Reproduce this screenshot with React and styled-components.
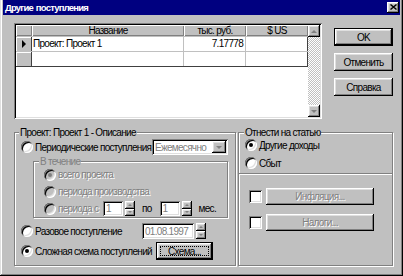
import React from 'react'
import styled, { createGlobalStyle, css } from 'styled-components'

const GlobalStyle = createGlobalStyle`
  html, body {
    margin: 0;
    padding: 0;
    background: #c0c0c0;
  }
  body {
    font-family: "Liberation Sans", Arial, sans-serif;
    font-size: 10px;
    letter-spacing: -0.7px;
    color: #000;
  }
  * { box-sizing: border-box; }
`

const raised = css`
  background: #c0c0c0;
  box-shadow: inset -1px -1px 0 #000, inset 1px 1px 0 #fff,
    inset -2px -2px 0 #808080, inset 2px 2px 0 #dfdfdf;
`

const sunken = css`
  box-shadow: inset 1px 1px 0 #808080, inset -1px -1px 0 #fff,
    inset 2px 2px 0 #000, inset -2px -2px 0 #dfdfdf;
`

const Window = styled.div`
  width: 403px;
  height: 276px;
  background: #c0c0c0;
  padding: 0 3px 3px 3px;
  display: flex;
  flex-direction: column;
  box-shadow: inset -1px -1px 0 #000, inset 1px 0 0 #dfdfdf,
    inset -2px -2px 0 #808080, inset 2px 0 0 #fff;
`

const TitleBar = styled.div`
  height: 15px;
  background: #000080;
  color: #fff;
  display: flex;
  align-items: center;
  justify-content: space-between;
  padding: 0 1px 1px 2px;
`

const TitleText = styled.span`
  font-weight: bold;
  font-size: 9.5px;
  letter-spacing: -0.8px;
  word-spacing: 1px;
`

const CloseBox = styled.div`
  ${raised}
  width: 12px;
  height: 11px;
  display: grid;
  place-items: center;
`

const Body = styled.div`
  flex: 1;
  padding: 8px 7px 0 11px;
  display: flex;
  flex-direction: column;
`

const TopRow = styled.div`
  display: flex;
  gap: 12px;
  height: 96px;
`

const Grid = styled.div`
  ${sunken}
  background: #fff;
  width: 308px;
  padding: 2px;
  display: flex;
`

const Table = styled.div`
  width: 292px;
  display: flex;
  flex-direction: column;
`

const Row = styled.div`
  display: grid;
  grid-template-columns: 16px 152px 62px 62px;
  height: ${p => p.$h}px;
  border-bottom: 1px solid ${p => p.$last ? '#404040' : '#c0c0c0'};
`

const HeadCell = styled.div`
  background: #c0c0c0;
  box-shadow: inset 1px 1px 0 #fff, inset -1px -1px 0 #808080;
  text-align: center;
  line-height: 12px;
  white-space: nowrap;
  overflow: hidden;
`

const Indicator = styled.div`
  background: #c0c0c0;
  border-right: 1px solid #404040;
  box-shadow: inset 1px 1px 0 #fff;
  display: grid;
  place-items: center;
`

const Cell = styled.div`
  border-right: 1px solid ${p => p.$edge ? '#404040' : '#c0c0c0'};
  text-align: ${p => p.$right ? 'right' : 'left'};
  padding: 0 2px 0 1px;
  line-height: 14px;
  white-space: nowrap;
`

const ScrollBar = styled.div`
  width: 12px;
  display: flex;
  flex-direction: column;
`

const ScrollBtn = styled.div`
  ${raised}
  height: 12px;
  display: grid;
  place-items: center;
`

const Track = styled.div`
  flex: 1;
  background-image: conic-gradient(#fff 25%, #c0c0c0 0 50%, #fff 0 75%, #c0c0c0 0);
  background-size: 2px 2px;
`

const ButtonColumn = styled.div`
  width: 59px;
  padding-top: 5px;
  display: flex;
  flex-direction: column;
  gap: 7px;
`

const Button = styled.button`
  ${raised}
  position: relative;
  font: inherit;
  letter-spacing: inherit;
  border: ${p => p.$default ? '1px solid #000' : 'none'};
  width: ${p => p.$w ? p.$w + 'px' : '100%'};
  height: ${p => p.$h || 18}px;
  padding: 0;
  flex: none;
  color: ${p => p.disabled ? '#808080' : '#000'};
  text-shadow: ${p => p.disabled ? '1px 1px 0 #fff' : 'none'};
  ${p => p.$focus && css`
    &::after {
      content: '';
      position: absolute;
      inset: 3px;
      border: 1px dotted #000;
    }
  `}
`

const GroupsRow = styled.div`
  display: flex;
  gap: 2px;
  margin-top: 7px;
  height: 140px;
`

const Group = styled.fieldset`
  margin: 0;
  min-width: 0;
  width: ${p => p.$w}px;
  padding: 0 6px 0 6px;
  border: 1px solid #808080;
  box-shadow: inset 1px 1px 0 #fff, 1px 1px 0 #fff;
  display: flex;
  flex-direction: column;
`

const InnerGroup = styled(Group)`
  margin-left: 12px;
  padding: 0 0 0 10px;
  width: 195px;
  flex: none;
`

const Legend = styled.legend`
  background: #c0c0c0;
  padding: 0 1px;
  margin-left: ${p => p.$shift || -2}px;
  line-height: 13px;
  color: ${p => p.$disabled ? '#808080' : '#000'};
`

const Line = styled.div`
  display: flex;
  align-items: center;
  height: ${p => p.$h || 17}px;
  margin-top: ${p => p.$mt || 0}px;
  flex: none;
`

const Choice = styled.label`
  display: flex;
  align-items: center;
  gap: 2px;
  flex: none;
  width: ${p => p.$w ? p.$w + 'px' : 'auto'};
  white-space: nowrap;
  color: ${p => p.$disabled ? '#808080' : '#000'};
  text-shadow: ${p => p.$disabled ? '1px 1px 0 #fff' : 'none'};
`

const RadioDot = styled.span`
  width: 12px;
  height: 12px;
  border-radius: 50%;
  flex: none;
  background: ${p => p.$disabled ? '#c0c0c0' : '#fff'};
  box-shadow: inset 1px 1px 0 #808080, inset -1px -1px 0 #fff,
    inset 2px 2px 0 #000, inset -2px -2px 0 #dfdfdf;
  display: grid;
  place-items: center;
  &::after {
    content: '';
    display: ${p => p.$checked ? 'block' : 'none'};
    width: 4px;
    height: 4px;
    border-radius: 50%;
    background: ${p => p.$disabled ? '#808080' : '#000'};
  }
`

const CheckBox = styled.span`
  ${sunken}
  width: 13px;
  height: 13px;
  background: #fff;
  flex: none;
`

const Field = styled.div`
  ${sunken}
  background: #fff;
  width: ${p => p.$w}px;
  height: ${p => p.$h || 16}px;
  margin-left: ${p => p.$ml || 0}px;
  padding: 0 2px 0 3px;
  display: flex;
  align-items: center;
  justify-content: space-between;
  color: #808080;
  flex: none;
  white-space: nowrap;
`

const DropBtn = styled.div`
  ${raised}
  width: 14px;
  height: 12px;
  display: grid;
  place-items: center;
`

const Spin = styled.div`
  width: 10px;
  height: ${p => p.$h || 16}px;
  margin-left: 2px;
  display: flex;
  flex-direction: column;
  flex: none;
`

const SpinBtn = styled.div`
  ${raised}
  flex: 1;
  display: grid;
  place-items: center;
`

const Text = styled.span`
  margin-left: ${p => p.$ml || 0}px;
  white-space: nowrap;
  flex: none;
`

const Separator = styled.div`
  margin: 1px -6px 0;
  border-top: 1px solid #808080;
  border-bottom: 1px solid #fff;
  flex: none;
`

const CheckLine = styled.div`
  display: flex;
  align-items: center;
  gap: 4px;
  padding-left: 4px;
  margin-top: ${p => p.$mt}px;
`

function Arrow({ dir, color = '#000', size = 3 }) {
  const s = size
  const pts = {
    up: `0,${s} ${s},0 ${2 * s},${s}`,
    down: `0,0 ${2 * s},0 ${s},${s}`,
    right: `0,0 ${s},${s} 0,${2 * s}`,
  }[dir]
  const w = dir === 'right' ? s : 2 * s
  const h = dir === 'right' ? 2 * s : s
  return (
    <svg width={w} height={h} viewBox={`0 0 ${w} ${h}`} style={{ display: 'block' }}>
      <polygon points={pts} fill={color} />
    </svg>
  )
}

function Radio({ checked, disabled, w, children }) {
  return (
    <Choice $w={w} $disabled={disabled}>
      <RadioDot $checked={checked} $disabled={disabled} />
      <span>{children}</span>
    </Choice>
  )
}

function Spinner({ h }) {
  return (
    <Spin $h={h}>
      <SpinBtn><Arrow dir="up" color="#808080" size={2} /></SpinBtn>
      <SpinBtn><Arrow dir="down" color="#808080" size={2} /></SpinBtn>
    </Spin>
  )
}

export default function App() {
  return (
    <>
      <GlobalStyle />
      <Window>
        <TitleBar>
          <TitleText>Другие поступления</TitleText>
          <CloseBox>
            <svg width="7" height="6" viewBox="0 0 7 6">
              <path d="M0.5 0.5 L6.5 5.5 M6.5 0.5 L0.5 5.5" stroke="#000" strokeWidth="1.4" />
            </svg>
          </CloseBox>
        </TitleBar>

        <Body>
          <TopRow>
            <Grid>
              <Table>
                <Row $h={12}>
                  <HeadCell />
                  <HeadCell>Название</HeadCell>
                  <HeadCell>тыс. руб.</HeadCell>
                  <HeadCell>$ US</HeadCell>
                </Row>
                <Row $h={15}>
                  <Indicator><Arrow dir="right" size={4} /></Indicator>
                  <Cell>Проект: Проект 1</Cell>
                  <Cell $right>7.17778</Cell>
                  <Cell $edge />
                </Row>
                <Row $h={15} $last>
                  <Indicator />
                  <Cell />
                  <Cell />
                  <Cell $edge />
                </Row>
              </Table>
              <ScrollBar>
                <ScrollBtn><Arrow dir="up" color="#808080" size={3} /></ScrollBtn>
                <Track />
                <ScrollBtn><Arrow dir="down" color="#808080" size={3} /></ScrollBtn>
              </ScrollBar>
            </Grid>

            <ButtonColumn>
              <Button $default>OK</Button>
              <Button>Отменить</Button>
              <Button>Справка</Button>
            </ButtonColumn>
          </TopRow>

          <GroupsRow>
            <Group $w={222}>
              <Legend>Проект: Проект 1 - Описание</Legend>
              <Line $h={16}>
                <Radio w={131}>Периодические поступления</Radio>
                <Field $w={76}>
                  <span>Ежемесячно</span>
                  <DropBtn><Arrow dir="down" color="#808080" size={3} /></DropBtn>
                </Field>
              </Line>

              <InnerGroup $w={195}>
                <Legend $shift={-5} $disabled>В течение</Legend>
                <Line $mt={-2}>
                  <Radio checked disabled>всего проекта</Radio>
                </Line>
                <Line>
                  <Radio disabled>периода производства</Radio>
                </Line>
                <Line>
                  <Radio disabled w={59}>периода с</Radio>
                  <Field $w={20} $h={15}>1</Field>
                  <Spinner h={15} />
                  <Text $ml={7}>по</Text>
                  <Field $w={20} $h={15} $ml={8}>1</Field>
                  <Spinner h={15} />
                  <Text $ml={7}>мес.</Text>
                </Line>
              </InnerGroup>

              <Line $h={20} $mt={3}>
                <Radio w={121}>Разовое поступление</Radio>
                <Field $w={52}>01.08.1997</Field>
                <Spinner />
              </Line>
              <Line $h={20}>
                <Radio checked w={135}>Сложная схема поступлений</Radio>
                <Button $default $focus $w={57}>Схема...</Button>
              </Line>
            </Group>

            <Group $w={155}>
              <Legend $shift={-1}>Отнести на статью</Legend>
              <Line $h={18} $mt={-3}>
                <Radio checked>Другие доходы</Radio>
              </Line>
              <Line $h={18}>
                <Radio>Сбыт</Radio>
              </Line>
              <Separator />
              <CheckLine $mt={13}>
                <CheckBox />
                <Button disabled $w={108} $h={17}>Инфляция...</Button>
              </CheckLine>
              <CheckLine $mt={9}>
                <CheckBox />
                <Button disabled $w={108} $h={17}>Налоги...</Button>
              </CheckLine>
            </Group>
          </GroupsRow>
        </Body>
      </Window>
    </>
  )
}
